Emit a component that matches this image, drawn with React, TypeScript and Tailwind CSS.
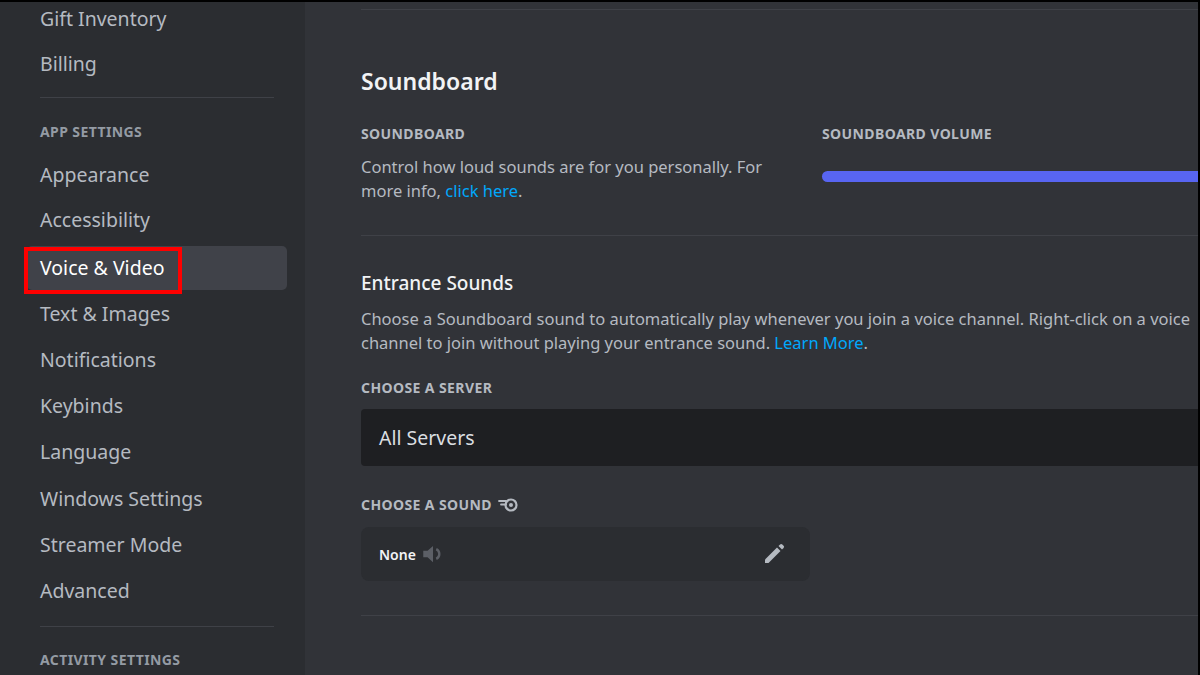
import React from "react";

const F = { fontFamily: '"Noto Sans", "Open Sans", sans-serif' };

export default function App() {
  const items1 = ["Appearance", "Accessibility"];
  const items2 = ["Text & Images", "Notifications", "Keybinds", "Language", "Windows Settings", "Streamer Mode", "Advanced"];
  return (
    <div style={F} className="w-[1200px] h-[675px] bg-black p-[2px] pl-0 pb-0 overflow-hidden">
      <div className="flex w-[1198px] h-[673px] overflow-hidden">
        <div className="w-[305px] shrink-0 bg-[#2b2d31] pl-[27px] pr-[18px] text-[#b5bac1]">
          <div className="h-[44px] flex items-center pl-[13px] text-[19.5px] -mt-[5px]">Gift Inventory</div>
          <div className="h-[46px] flex items-center pl-[13px] text-[19.5px]">Billing</div>
          <div className="mx-[13px] mt-[10px] h-px bg-[#3f4147]" />
          <div className="pl-[13px] pt-[23px] pb-[10px] text-[14px] font-bold tracking-[0.4px] text-[#949ba4]">APP SETTINGS</div>
          {items1.map((t) => (
            <div key={t} className="h-[45px] flex items-center pl-[13px] text-[19.5px]">{t}</div>
          ))}
          <div className="h-[44px] mt-[4px] flex items-center rounded-[5px] bg-[#404249] relative">
            <div className="absolute left-[-3px] top-[1px] w-[158px] h-[47px] border-[4px] border-[#ff0000]" />
            <span className="pl-[13px] text-[19.5px] text-white">Voice &amp; Video</span>
          </div>
          {items2.map((t) => (
            <div key={t} className="h-[46.3px] flex items-center pl-[13px] text-[19.5px]">{t}</div>
          ))}
          <div className="mx-[13px] mt-[12px] h-px bg-[#3f4147]" />
          <div className="pl-[13px] pt-[22px] text-[14px] font-bold tracking-[0.4px] text-[#949ba4]">ACTIVITY SETTINGS</div>
        </div>
        <div className="flex-1 bg-[#313338] pl-[56px] text-[#b5bac1]">
          <div className="mt-[7px] h-px bg-[#3f4147]" />
          <div className="pt-[54px] text-[23px] font-semibold text-[#f2f3f5]">Soundboard</div>
          <div className="flex mt-[24px]">
            <div className="w-[461px]">
              <div className="text-[14px] font-bold text-[#b5bac1] tracking-[0.4px]">SOUNDBOARD</div>
              <div className="mt-[11px] text-[16.5px] leading-[24px] w-[430px]">
                Control how loud sounds are for you personally. For more info, <span className="text-[#00a8fc]">click here</span>.
              </div>
            </div>
            <div className="flex-1">
              <div className="text-[14px] font-bold text-[#b5bac1] tracking-[0.4px]">SOUNDBOARD VOLUME</div>
              <div className="mt-[27px] h-[11px] rounded-l-full bg-[#5865f2]" />
            </div>
          </div>
          <div className="mt-[32px] h-px bg-[#3f4147]" />
          <div className="pt-[33px] text-[19px] font-medium text-[#f2f3f5]">Entrance Sounds</div>
          <div className="mt-[10px] text-[16.5px] leading-[24px] whitespace-nowrap">
            Choose a Soundboard sound to automatically play whenever you join a voice channel. Right-click on a voice<br />
            channel to join without playing your entrance sound. <span className="text-[#00a8fc]">Learn More</span>.
          </div>
          <div className="mt-[22px] text-[14px] font-bold tracking-[0.4px]">CHOOSE A SERVER</div>
          <div className="mt-[11px] h-[57px] bg-[#1e1f22] rounded-l-[4px] flex items-center pl-[18px] text-[19.5px] text-[#dbdee1]">All Servers</div>
          <div className="mt-[28px] flex items-center gap-[6px] text-[14px] font-bold tracking-[0.4px]">
            CHOOSE A SOUND
            <svg width="22" height="16" viewBox="0 0 22 16" fill="none">
              <circle cx="13" cy="8" r="5.5" stroke="#b5bac1" strokeWidth="2.2" />
              <circle cx="13" cy="8" r="2" fill="#b5bac1" />
              <path d="M1 4h7M3 7.5h5" stroke="#b5bac1" strokeWidth="1.8" strokeLinecap="round" />
            </svg>
          </div>
          <div className="mt-[12px] w-[449px] h-[54px] rounded-[8px] bg-[#2b2d31] flex items-center pl-[18px] pr-[24px]">
            <span className="text-[14px] font-semibold text-[#f2f3f5]">None</span>
            <svg className="ml-[4px]" width="26" height="26" viewBox="0 0 24 24">
              <path d="M3 9h4l5-4.5v15L7 15H3z" fill="#5c5f66" />
              <path d="M15 7.5a5 5 0 010 9" stroke="#5c5f66" strokeWidth="2.2" fill="none" />
            </svg>
            <div className="flex-1" />
            <svg width="24" height="24" viewBox="0 0 24 24">
              <path d="M3 17.5L15 5.5l3.5 3.5L6.5 21H3z" fill="#b5bac1" />
              <path d="M16.5 4l1.6-1.6a1.6 1.6 0 012.2 0l1.3 1.3a1.6 1.6 0 010 2.2L20 7.5z" fill="#b5bac1" />
            </svg>
          </div>
          <div className="mt-[34px] h-px bg-[#3f4147]" />
        </div>
      </div>
    </div>
  );
}
